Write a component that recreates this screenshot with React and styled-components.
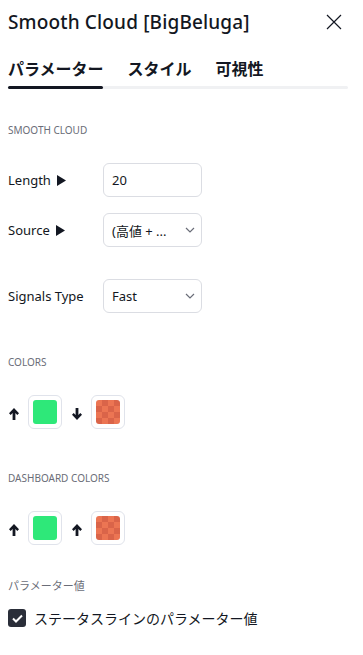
import React from 'react';
import styled, { createGlobalStyle } from 'styled-components';

const GlobalStyle = createGlobalStyle`
  body {
    margin: 0;
    background: #fff;
    font-family: "Noto Sans", "Noto Sans CJK JP", sans-serif;
    color: #131722;
  }
`

const Panel = styled.div`
  width: 363px;
  height: 655px;
  padding: 0 15px 0 8px;
  box-sizing: border-box;
  display: flex;
  flex-direction: column;
`

const Header = styled.div`
  height: 44px;
  display: flex;
  align-items: center;
  justify-content: space-between;
`

const Title = styled.div`
  font-size: 19px;
  font-weight: 500;
  letter-spacing: 0.15px;
`

const CloseButton = styled.div`
  width: 16px;
  height: 16px;
  margin-right: 6px;
  display: flex;
`

const Tabs = styled.div`
  margin-top: 12px;
  display: flex;
  gap: 24px;
`

const Tab = styled.div`
  font-family: "Noto Sans CJK JP", sans-serif;
  font-size: 16px;
  font-weight: 700;
  line-height: 24px;
`

const TabTrack = styled.div`
  margin-top: 6px;
  height: 3px;
  border-radius: 2px;
  background: #f0f1f3;
  display: flex;
`

const TabIndicator = styled.div`
  width: 95px;
  height: 3px;
  border-radius: 2px;
  background: #131722;
`

const SectionTitle = styled.div`
  margin-top: ${p => p.$gap}px;
  line-height: 16px;
  color: #6a6d78;
  font-family: ${p => (p.$jp ? '"Noto Sans CJK JP", sans-serif' : 'inherit')};
  font-size: ${p => (p.$jp ? '11px' : '10px')};
`

const Row = styled.div`
  margin-top: ${p => p.$gap}px;
  display: flex;
  align-items: center;
  height: 34px;
`

const Label = styled.div`
  width: 95px;
  font-size: 13px;
  display: flex;
  align-items: center;
  gap: 6px;
`

const Field = styled.div`
  width: 99px;
  height: 34px;
  box-sizing: border-box;
  border: 1px solid #dbdde3;
  border-radius: 6px;
  padding: 0 6px 0 8px;
  display: flex;
  align-items: center;
  justify-content: space-between;
  font-size: 13px;
  font-family: "Noto Sans", "Noto Sans CJK JP", sans-serif;
`

const SwatchRow = styled.div`
  margin-top: ${p => p.$gap}px;
  display: flex;
  align-items: center;
  height: 34px;
  padding-left: 1px;

  > svg {
    margin-top: 3px;
  }
`

const SwatchBox = styled.div`
  width: 34px;
  height: 34px;
  box-sizing: border-box;
  border: 1px solid #e0e3eb;
  border-radius: 6px;
  display: flex;
  align-items: center;
  justify-content: center;
  margin: 0 10px 0 9px;
`

const Swatch = styled.div`
  width: 24px;
  height: 24px;
  border-radius: 3px;
  background: ${p => p.$color};
`

const Checker = styled.div`
  width: 24px;
  height: 24px;
  border-radius: 3px;
  background-color: #ec7553;
  background-image:
    linear-gradient(45deg, #da6449 25%, transparent 25%, transparent 75%, #da6449 75%),
    linear-gradient(45deg, #da6449 25%, transparent 25%, transparent 75%, #da6449 75%);
  background-size: 12px 12px;
  background-position: 0 0, 6px 6px;
`

const CheckRow = styled.div`
  margin-top: 16px;
  display: flex;
  align-items: center;
  gap: 8px;
  height: 18px;
`

const Checkbox = styled.div`
  width: 18px;
  height: 18px;
  border-radius: 3px;
  background: #2a2e39;
  display: flex;
  align-items: center;
  justify-content: center;
`

const CheckText = styled.div`
  font-family: "Noto Sans CJK JP", sans-serif;
  font-size: 14px;
`

const Triangle = () => (
  <svg width="9" height="11" viewBox="0 0 9 11"><path d="M0 0L9 5.5L0 11Z" fill="#131722" /></svg>
)

const Chevron = () => (
  <svg width="10" height="6" viewBox="0 0 10 6"><path d="M1 1L5 5L9 1" fill="none" stroke="#6a6d78" strokeWidth="1.2" /></svg>
)

const Arrow = ({ down }) => (
  <svg width="10" height="12" viewBox="0 0 10 12" style={down ? { transform: 'rotate(180deg)' } : undefined}>
    <path d="M5 0L10 5.2L8.3 6.9L6.4 5V12H3.6V5L1.7 6.9L0 5.2Z" fill="#131722" />
  </svg>
)

const App = () => (
  <>
    <GlobalStyle />
    <Panel>
      <Header>
        <Title>Smooth Cloud [BigBeluga]</Title>
        <CloseButton>
          <svg width="16" height="16" viewBox="0 0 16 16"><path d="M1 1L15 15M15 1L1 15" stroke="#131722" strokeWidth="1.2" /></svg>
        </CloseButton>
      </Header>
      <Tabs>
        <Tab>パラメーター</Tab>
        <Tab>スタイル</Tab>
        <Tab>可視性</Tab>
      </Tabs>
      <TabTrack><TabIndicator /></TabTrack>

      <SectionTitle $gap={33}>SMOOTH CLOUD</SectionTitle>
      <Row $gap={25}>
        <Label>Length <Triangle /></Label>
        <Field>20</Field>
      </Row>
      <Row $gap={16}>
        <Label>Source <Triangle /></Label>
        <Field>(高値 + ... <Chevron /></Field>
      </Row>
      <Row $gap={32}>
        <Label>Signals Type</Label>
        <Field>Fast <Chevron /></Field>
      </Row>

      <SectionTitle $gap={41}>COLORS</SectionTitle>
      <SwatchRow $gap={25}>
        <Arrow />
        <SwatchBox><Swatch $color="#2ee879" /></SwatchBox>
        <Arrow down />
        <SwatchBox><Checker /></SwatchBox>
      </SwatchRow>

      <SectionTitle $gap={41}>DASHBOARD COLORS</SectionTitle>
      <SwatchRow $gap={25}>
        <Arrow />
        <SwatchBox><Swatch $color="#2ee879" /></SwatchBox>
        <Arrow />
        <SwatchBox><Checker /></SwatchBox>
      </SwatchRow>

      <SectionTitle $gap={32} $jp>パラメーター値</SectionTitle>
      <CheckRow>
        <Checkbox>
          <svg width="11" height="9" viewBox="0 0 11 9"><path d="M1 4.5L4 7.5L10 1.5" fill="none" stroke="#fff" strokeWidth="2" /></svg>
        </Checkbox>
        <CheckText>ステータスラインのパラメーター値</CheckText>
      </CheckRow>
    </Panel>
  </>
)

export default App;
